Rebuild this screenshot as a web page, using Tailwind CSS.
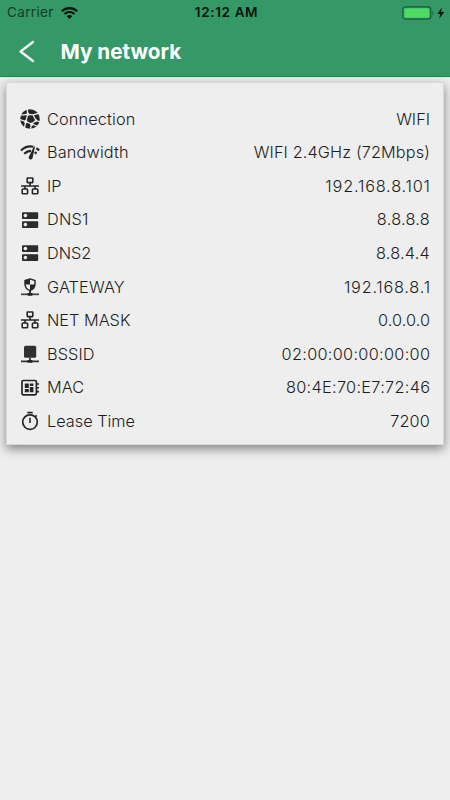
<!DOCTYPE html>
<html lang="en">
<head>
<meta charset="utf-8">
<title>My network</title>
<script src="https://cdn.jsdelivr.net/npm/@tailwindcss/browser@4"></script>
</head>
<body class="h-[800px] w-[450px] overflow-hidden bg-[#eeeeee] font-['Inter','Liberation_Sans',sans-serif] text-[#1d1d1d]">
<svg class="hidden">
  <symbol id="globe" viewBox="0 0 20 20">
    <circle cx="10" cy="10" r="9.8" fill="#242626"/>
    <g stroke="#eee" fill="none" stroke-width="1.3">
      <path d="M1 6.2 7.8 5.4 7.2 0M7.8 5.4 13 5.8 20 4M13 5.8 16 11.5 20 13M7.8 5.4 5.8 12.5 0 10.5M5.8 12.5 11.5 15 16 11.5M5.8 12.5 4.5 19M11.5 15 10.5 20M11.5 15 17 17"/>
    </g>
    <g fill="#eee"><circle cx="7.8" cy="5.2" r="1.6"/><circle cx="5.8" cy="12.7" r="1.7"/><circle cx="11.8" cy="15.2" r="1.6"/><circle cx="16" cy="11.5" r="1.2"/></g>
  </symbol>
  <symbol id="speed" viewBox="0 0 20 20">
    <g stroke="#242626" fill="none" stroke-width="2.2">
      <path d="M1 8.5C4.5 5.2 9 3.8 13.3 4.8M16.4 6.1 19.2 8.3M4.2 11.8C6.3 9.7 8.5 8.7 11 8.8M14.8 10 16.5 11.6"/>
    </g>
    <path d="M14 4.3 15 4.7 12.7 15.3A2 2 0 1 1 9 14.4Z" fill="#242626"/>
  </symbol>
  <symbol id="lan" viewBox="0 0 20 20">
    <g stroke="#242626" fill="none" stroke-width="1.6">
      <rect x="7.2" y="2" width="5.6" height="4.6" rx=".5"/>
      <path d="M10 6.6V10M1 10H19M5 10v3M15 10v3"/>
      <rect x="2.2" y="13" width="5.4" height="4.8" rx=".8"/>
      <rect x="12.4" y="13" width="5.4" height="4.8" rx=".8"/>
    </g>
  </symbol>
  <symbol id="dns" viewBox="0 0 20 20">
    <rect x="2" y="2.2" width="16.2" height="6.8" rx=".8" fill="#2c2c2c"/>
    <rect x="2" y="11.2" width="16.2" height="6.8" rx=".8" fill="#2c2c2c"/>
    <circle cx="5.4" cy="5.6" r="1.8" fill="#eee"/><circle cx="5.4" cy="14.6" r="1.8" fill="#eee"/>
  </symbol>
  <symbol id="gateway" viewBox="0 0 20 20">
    <path d="M10 1.9 15 3.6V7.2C15 10.3 13 12.4 10 13.7 7 12.4 5 10.3 5 7.2V3.6Z" fill="#eee" stroke="#242626" stroke-width="1.4"/>
    <path d="M10 2V7.6H5V3.6ZM10 7.6H15C15 10 13 12.2 10 13.4Z" fill="#242626"/>
    <path d="M10 13.5V17" stroke="#242626" stroke-width="1.8"/>
    <path d="M1 17.3H19" stroke="#494949" stroke-width="1.8"/><rect x="7.4" y="15.9" width="5.2" height="2.8" rx="1" fill="#242626"/>
  </symbol>
  <symbol id="server" viewBox="0 0 20 20">
    <rect x="4" y="1.8" width="12.2" height="12" rx="1.5" fill="#303030"/>
    <path d="M10 13.5V17M1 17.3H19" stroke="#333" stroke-width="1.8"/><rect x="7.4" y="16" width="5.2" height="2.7" rx=".8" fill="#242626"/>
  </symbol>
  <symbol id="chip" viewBox="0 0 20 20">
    <rect x="2" y="2.5" width="14.4" height="14.4" rx="1.3" fill="none" stroke="#242626" stroke-width="1.7"/>
    <path d="M16 6h3M16 9.8h3M16 13.6h3" stroke="#242626" stroke-width="1.6"/>
    <path d="M4.8 5.4h4v4.5h-4ZM9.8 5.4h3.6v2.6H9.8ZM4.8 10.9h4v3.3h-4ZM9.8 9h3.6v5.2H9.8Z" fill="#242626"/>
  </symbol>
  <symbol id="timer" viewBox="0 0 20 20">
    <circle cx="10" cy="11.1" r="7.3" fill="none" stroke="#242626" stroke-width="1.7"/>
    <path d="M7.3 1.6h5.4M15 6l1.7-1.6" stroke="#242626" stroke-width="1.7"/><path d="M10 6.8v5.2" stroke="#242626" stroke-width="1.6"/>
  </symbol>
</svg>
<header class="h-[78px] border-b border-[#d5eee1] bg-[#349966]">
  <div class="h-[77px] border-b border-[#079152]">
    <div class="grid h-[25px] grid-cols-3 items-center px-[7px] text-[13.5px] text-[#07130c]">
      <div class="flex items-center gap-[7px]">
        <span class="tracking-[0.35px] text-[#153d29]">Carrier</span>
        <svg class="h-[12px] w-[17px]" viewBox="0 0 17 12" fill="none" stroke="#07130c" stroke-width="2.1"><path d="M.8 4.2C5.2.1 11.8.1 16.2 4.2M3.5 7C6.4 4.3 10.6 4.3 13.5 7"/><path d="M5.6 9.2C7.3 7.6 9.7 7.6 11.4 9.2L8.5 12Z" fill="#07130c" stroke="none"/></svg>
      </div>
      <span class="pl-[3px] text-center font-semibold tracking-[0.65px] whitespace-nowrap">12:12 AM</span>
      <div class="-mr-[3px] flex items-center justify-end">
        <svg class="h-[14px] w-[44px]" viewBox="0 0 44 14"><rect x=".8" y=".8" width="28" height="12.4" rx="2.6" fill="none" stroke="#20593c" stroke-width="1.2"/><rect x="2.3" y="2.3" width="25" height="9.4" rx="1.2" fill="#4cdb62"/><path d="M30.5 4.8c1.5.7 1.5 3.7 0 4.4Z" fill="#20593c"/><path d="M40 1.3 35.4 7.9H38.4L37.2 12.7 42.2 6.1H39.1Z" fill="#07130c"/></svg>
      </div>
    </div>
    <div class="flex h-[53px] items-center pl-[18px]">
      <svg class="h-[24px] w-[18px]" viewBox="0 0 18 24" fill="none" stroke="#fff" stroke-width="2.2" stroke-linecap="round" stroke-linejoin="round"><path d="M15 2 2.5 11.5 15 21"/></svg>
      <h1 class="ml-[24.5px] text-[20.7px] font-bold text-white">My network</h1>
    </div>
  </div>
</header>
<main class="mt-[4px] mr-[6px] ml-[6px] h-[363px] border border-[#d9d9d9] bg-[#eeeeee] px-[13px] pt-[19px] shadow-[0_4px_10px_0_rgba(0,0,0,0.45)]">
  <dl class="grid auto-rows-[33.6px] text-[16.3px] font-light">
    <div class="flex items-center"><svg class="mr-[7px] size-[20px]"><use href="#globe"/></svg><dt class="flex-1 tracking-[0.15px]">Connection</dt><dd>WIFI</dd></div>
    <div class="flex items-center"><svg class="mr-[7px] size-[20px]"><use href="#speed"/></svg><dt class="flex-1 tracking-[0.15px]">Bandwidth</dt><dd class="tracking-[0.12px]">WIFI 2.4GHz (72Mbps)</dd></div>
    <div class="flex items-center"><svg class="mr-[7px] size-[20px]"><use href="#lan"/></svg><dt class="flex-1">IP</dt><dd class="-mr-[0.8px] tracking-[0.8px]">192.168.8.101</dd></div>
    <div class="flex items-center"><svg class="mr-[7px] size-[20px]"><use href="#dns"/></svg><dt class="flex-1 tracking-[0.25px]">DNS1</dt><dd class="tracking-[0.25px]">8.8.8.8</dd></div>
    <div class="flex items-center"><svg class="mr-[7px] size-[20px]"><use href="#dns"/></svg><dt class="flex-1">DNS2</dt><dd class="tracking-[0.2px]">8.8.4.4</dd></div>
    <div class="flex items-center"><svg class="mr-[7px] size-[20px]"><use href="#gateway"/></svg><dt class="flex-1 tracking-[0.15px]">GATEWAY</dt><dd class="-mr-[0.8px] tracking-[0.75px]">192.168.8.1</dd></div>
    <div class="flex items-center"><svg class="mr-[7px] size-[20px]"><use href="#lan"/></svg><dt class="flex-1">NET MASK</dt><dd class="tracking-[0.05px]">0.0.0.0</dd></div>
    <div class="flex items-center"><svg class="mr-[7px] size-[20px]"><use href="#server"/></svg><dt class="flex-1 tracking-[0.1px]">BSSID</dt><dd class="-mr-[0.3px] tracking-[0.3px]">02:00:00:00:00:00</dd></div>
    <div class="flex items-center"><svg class="mr-[7px] size-[20px]"><use href="#chip"/></svg><dt class="flex-1">MAC</dt><dd class="-mr-[0.3px] tracking-[0.3px]">80:4E:70:E7:72:46</dd></div>
    <div class="flex items-center"><svg class="mr-[7px] size-[20px]"><use href="#timer"/></svg><dt class="flex-1">Lease Time</dt><dd class="tracking-[0.15px]">7200</dd></div>
  </dl>
</main>
</body>
</html>
